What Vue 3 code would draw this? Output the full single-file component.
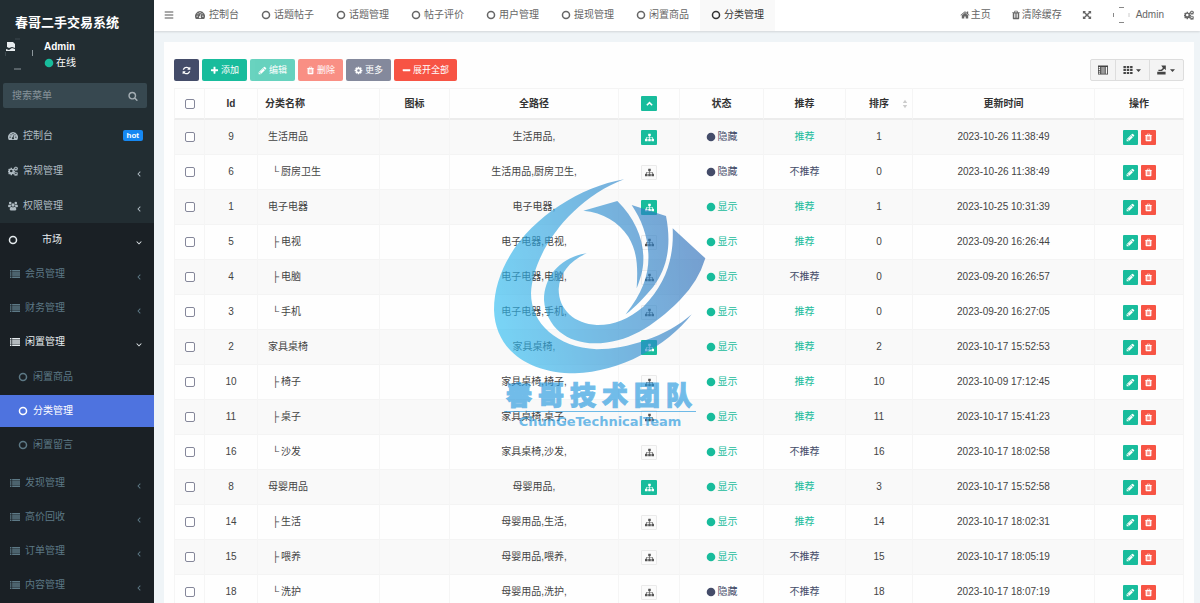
<script setup>
import { h, ref } from 'vue'

const cogPath = 'M1152 896q0-106-75-181t-181-75-181 75-75 181 75 181 181 75 181-75 75-181zm512-109v222q0 12-8 23t-20 13l-185 28q-19 54-39 91 35 50 107 138 10 12 10 25t-9 23q-27 37-99 108t-94 71q-12 0-26-9l-138-108q-44 23-91 38-16 136-29 186-7 28-36 28h-222q-14 0-24.5-8.5t-11.5-21.5l-28-184q-49-16-90-37l-141 107q-10 9-25 9-14 0-25-11-126-114-165-168-7-10-7-23 0-12 8-23 15-21 51-66.5t54-70.5q-27-50-41-99l-183-27q-13-2-21-12.5t-8-23.5v-222q0-12 8-23t19-13l186-28q14-46 39-92-40-57-107-138-10-12-10-24 0-10 9-23 26-36 98.5-107.5t94.5-71.5q13 0 26 10l138 107q44-23 91-38 16-136 29-186 7-28 36-28h222q14 0 24.5 8.5t11.5 21.5l28 184q49 16 90 37l142-107q9-9 24-9 13 0 25 10 129 119 165 170 7 8 7 22 0 12-8 23-15 21-51 66.5t-54 70.5q26 50 41 98l183 28q13 2 21 12.5t8 23.5z'

// simple gear with a wide hole, used for the double cog glyph
const gearPath = 'M740 100h312l40 230 150 62 190-134 222 222-134 190 62 150 230 40v312l-230 40-62 150 134 190-222 222-190-134-150 62-40 230h-312l-40-230-150-62-190 134-222-222 134-190-62-150-230-40v-312l230-40 62-150-134-190 222-222 190 134 150-62zM896 580a316 316 0 1 0 0 632a316 316 0 1 0 0-632z'

// all glyphs share a 1792 unit grid
const icons = {
  bars: ['M128 256h1536v192h-1536zM128 800h1536v192h-1536zM128 1344h1536v192h-1536z'],
  ring: ['M896 128a768 768 0 1 0 0 1536a768 768 0 1 0 0-1536zM896 400a496 496 0 1 1 0 992a496 496 0 1 1 0-992z'],
  circle: ['M896 128a768 768 0 1 0 0 1536a768 768 0 1 0 0-1536z'],
  dashboard: ['M896 200a896 896 0 0 0-768 1352q20 56 70 56h1396q50 0 70-56a896 896 0 0 0-768-1352zM384 1000a110 110 0 1 0 0 220a110 110 0 1 0 0-220zM540 560a110 110 0 1 0 0 220a110 110 0 1 0 0-220zM896 370a110 110 0 1 0 0 220a110 110 0 1 0 0-220zM1408 1000a110 110 0 1 0 0 220a110 110 0 1 0 0-220zM1252 560a110 110 0 1 0 0 220a110 110 0 1 0 0-220zM950 760l120 28-90 350a175 175 0 1 1-130-28z'],
  users: [
    'M896 420a300 300 0 1 0 0 600a300 300 0 1 0 0-600z',
    'M400 130a230 230 0 1 0 0 460a230 230 0 1 0 0-460z',
    'M1392 130a230 230 0 1 0 0 460a230 230 0 1 0 0-460z',
    'M600 1040q296 200 592 0q300 20 300 440q0 204-200 204h-792q-200 0-200-204q0-420 300-440z',
    'M200 620q180 120 340 20q-60 200 20 330q-170 30-240 130h-140q-170 0-170-150q0-310 190-330zM1592 620q-180 120-340 20q60 200-20 330q170 30 240 130h140q170 0 170-150q0-310-190-330z'
  ],
  list: ['M0 200h256v256h-256zM384 200h1408v256h-1408zM0 580h256v256h-256zM384 580h1408v256h-1408zM0 960h256v256h-256zM384 960h1408v256h-1408zM0 1340h256v256h-256zM384 1340h1408v256h-1408z'],
  cog: [cogPath],
  search: ['M1216 832q0-185-131.5-316.5t-316.5-131.5-316.5 131.5-131.5 316.5 131.5 316.5 316.5 131.5 316.5-131.5 131.5-316.5zm512 832q0 52-38 90t-90 38q-54 0-90-38l-343-342q-179 124-399 124-143 0-273.5-55.5t-225-150-150-225-55.5-273.5 55.5-273.5 150-225 225-150 273.5-55.5 273.5 55.5 225 150 150 225 55.5 273.5q0 220-124 399l343 343q37 37 37 90z'],
  home: ['M1472 992v480q0 26-19 45t-45 19h-384v-384h-256v384h-384q-26 0-45-19t-19-45v-480q0-1 .5-3t.5-3l575-474 575 474q1 2 1 6zm223-69l-62 74q-8 9-21 11h-3q-13 0-21-7l-692-577-692 577q-12 8-24 7-13-2-21-11l-62-74q-8-10-7-23.5t11-21.5l719-599q32-26 76-26t76 26l244 204v-195q0-14 9-23t23-9h192q14 0 23 9t9 23v408l219 182q10 8 11 21.5t-7 23.5z'],
  trash: ['M704 1376v-704q0-14-9-23t-23-9h-64q-14 0-23 9t-9 23v704q0 14 9 23t23 9h64q14 0 23-9t9-23zm256 0v-704q0-14-9-23t-23-9h-64q-14 0-23 9t-9 23v704q0 14 9 23t23 9h64q14 0 23-9t9-23zm256 0v-704q0-14-9-23t-23-9h-64q-14 0-23 9t-9 23v704q0 14 9 23t23 9h64q14 0 23-9t9-23zm-544-992h448l-48-117q-7-9-17-11h-317q-10 2-17 11zm928 32v64q0 14-9 23t-23 9h-96v948q0 83-47 143.5t-113 60.5h-832q-66 0-113-58.5t-47-141.5v-952h-96q-14 0-23-9t-9-23v-64q0-14 9-23t23-9h309l70-167q15-37 54-63t79-26h320q40 0 79 26t54 63l70 167h309q14 0 23 9t9 23z'],
  refresh: ['M1639 1056q0 5-1 7-64 268-268 434.5t-478 166.5q-146 0-282.5-55t-243.5-157l-129 129q-19 19-45 19t-45-19-19-45v-448q0-26 19-45t45-19h448q26 0 45 19t19 45-19 45l-137 137q71 66 161 102t187 36q134 0 250-65t186-179q11-17 53-117 8-23 30-23h192q13 0 22.5 9.5t9.5 22.5zm25-800v448q0 26-19 45t-45 19h-448q-26 0-45-19t-19-45 19-45l138-138q-148-137-349-137-134 0-250 65t-186 179q-11 17-53 117-8 23-30 23h-199q-13 0-22.5-9.5t-9.5-22.5v-7q65-268 270-434.5t480-166.5q146 0 284 55.5t245 156.5l130-129q19-19 45-19t45 19 19 45z'],
  plus: ['M1600 736v192q0 40-28 68t-68 28h-416v416q0 40-28 68t-68 28h-192q-40 0-68-28t-28-68v-416h-416q-40 0-68-28t-28-68v-192q0-40 28-68t68-28h416v-416q0-40 28-68t68-28h192q40 0 68 28t28 68v416h416q40 0 68 28t28 68z'],
  minus: ['M1650 736v192q0 40-28 68t-68 28h-1316q-40 0-68-28t-28-68v-192q0-40 28-68t68-28h1316q40 0 68 28t28 68z'],
  pencil: ['M491 1536l91-91-235-235-91 91v107h128v128h107zm523-928q0-22-22-22-10 0-17 7l-542 542q-7 7-7 17 0 22 22 22 10 0 17-7l542-542q7-7 7-17zm-54-192l416 416-832 832h-416v-416zm683 96q0 53-37 90l-166 166-416-416 166-165q36-38 90-38 53 0 91 38l235 234q37 39 37 91z'],
  sitemap: ['M1792 1248v320q0 40-28 68t-68 28h-320q-40 0-68-28t-28-68v-320q0-40 28-68t68-28h96v-192h-512v192h96q40 0 68 28t28 68v320q0 40-28 68t-68 28h-320q-40 0-68-28t-28-68v-320q0-40 28-68t68-28h96v-192h-512v192h96q40 0 68 28t28 68v320q0 40-28 68t-68 28h-320q-40 0-68-28t-28-68v-320q0-40 28-68t68-28h96v-192q0-52 38-90t90-38h512v-192h-96q-40 0-68-28t-28-68v-320q0-40 28-68t68-28h320q40 0 68 28t28 68v320q0 40-28 68t-68 28h-96v192h512q52 0 90 38t38 90v192h96q40 0 68 28t28 68z'],
  expand: ['M160 160h560l-190 190 366 366 366-366-190-190h560v560l-190-190-366 366 366 366 190-190v560h-560l190-190-366-366-366 366 190 190h-560v-560l190 190 366-366-366-366-190 190z'],
  up: ['M896 480l640 640-230 230-410-410-410 410-230-230z'],
  left: ['M1120 300l140 140-450 456 450 456-140 140-590-596z'],
  down: ['M300 620l140-140 456 450 456-450 140 140-596 590z'],
  caret: ['M250 600h1292l-646 680z'],
  columns: ['M0 100h1792v1592h-1792zM130 360v200h240v-200zM130 690v200h240v-200zM130 1020v200h240v-200zM130 1350v210h240v-210zM520 360v1200h90v-1200zM740 360v1200h90v-1200zM960 360v1200h90v-1200zM1180 360v1200h90v-1200zM1400 360v1200h240v-1200z'],
  grid: ['M80 160h440v400h-440zM676 160h440v400h-440zM1272 160h440v400h-440zM80 696h440v400h-440zM676 696h440v400h-440zM1272 696h440v400h-440zM80 1232h440v400h-440zM676 1232h440v400h-440zM1272 1232h440v400h-440z'],
  export: ['M40 1230h1500v460h-1500zM760 100h820v820l-260-260-430 430h-640v-220h480l330-330z'],
  sort: ['M896 120l400 600h-800zM896 1672l400-600h-800z']
}

const Icon = (props) => h(
  'svg',
  { class: 'icon', viewBox: '0 0 1792 1792', 'aria-hidden': 'true' },
  props.name === 'cogs'
    ? [
        h('path', { d: gearPath, transform: 'translate(-60 260) scale(.72)' }),
        h('path', { d: gearPath, transform: 'translate(1040 60) scale(.42)' }),
        h('path', { d: gearPath, transform: 'translate(1040 980) scale(.42)' })
      ]
    : icons[props.name].map((d) => h('path', { d }))
)
Icon.props = ['name']

const keyword = ref('')

const mainMenu = [
  { title: '控制台', icon: 'dashboard', badge: 'hot' },
  { title: '常规管理', icon: 'cogs' },
  { title: '权限管理', icon: 'users' }
]

const marketMenu = [
  { title: '会员管理' },
  { title: '财务管理' },
  {
    title: '闲置管理',
    open: true,
    children: [
      { title: '闲置商品' },
      { title: '分类管理', active: true },
      { title: '闲置留言' }
    ]
  },
  { title: '发现管理' },
  { title: '高价回收' },
  { title: '订单管理' },
  { title: '内容管理' }
]

const tabs = ['控制台', '话题帖子', '话题管理', '帖子评价', '用户管理', '提现管理', '闲置商品', '分类管理']
const activeTab = ref('分类管理')

const tools = [
  { text: '', icon: 'refresh', type: 'primary', label: '刷新' },
  { text: '添加', icon: 'plus', type: 'success' },
  { text: '编辑', icon: 'pencil', type: 'success', disabled: true },
  { text: '删除', icon: 'trash', type: 'danger', disabled: true },
  { text: '更多', icon: 'cog', type: 'primary', disabled: true },
  { text: '展开全部', icon: 'minus', type: 'danger' }
]

const rows = [
  { id: 9, name: '生活用品', path: '生活用品,', parent: true, show: false, rec: true, weigh: 1, time: '2023-10-26 11:38:49' },
  { id: 6, mark: '└', name: '厨房卫生', path: '生活用品,厨房卫生,', show: false, rec: false, weigh: 0, time: '2023-10-26 11:38:49' },
  { id: 1, name: '电子电器', path: '电子电器,', parent: true, show: true, rec: true, weigh: 1, time: '2023-10-25 10:31:39' },
  { id: 5, mark: '├', name: '电视', path: '电子电器,电视,', show: true, rec: true, weigh: 0, time: '2023-09-20 16:26:44' },
  { id: 4, mark: '├', name: '电脑', path: '电子电器,电脑,', show: true, rec: false, weigh: 0, time: '2023-09-20 16:26:57' },
  { id: 3, mark: '└', name: '手机', path: '电子电器,手机,', show: true, rec: true, weigh: 0, time: '2023-09-20 16:27:05' },
  { id: 2, name: '家具桌椅', path: '家具桌椅,', parent: true, show: true, rec: true, weigh: 2, time: '2023-10-17 15:52:53' },
  { id: 10, mark: '├', name: '椅子', path: '家具桌椅,椅子,', show: true, rec: true, weigh: 10, time: '2023-10-09 17:12:45' },
  { id: 11, mark: '├', name: '桌子', path: '家具桌椅,桌子,', show: true, rec: true, weigh: 11, time: '2023-10-17 15:41:23' },
  { id: 16, mark: '└', name: '沙发', path: '家具桌椅,沙发,', show: true, rec: false, weigh: 16, time: '2023-10-17 18:02:58' },
  { id: 8, name: '母婴用品', path: '母婴用品,', parent: true, show: true, rec: true, weigh: 3, time: '2023-10-17 15:52:58' },
  { id: 14, mark: '├', name: '生活', path: '母婴用品,生活,', show: true, rec: true, weigh: 14, time: '2023-10-17 18:02:31' },
  { id: 15, mark: '├', name: '喂养', path: '母婴用品,喂养,', show: true, rec: false, weigh: 15, time: '2023-10-17 18:05:19' },
  { id: 18, mark: '└', name: '洗护', path: '母婴用品,洗护,', show: false, rec: false, weigh: 18, time: '2023-10-17 18:07:19' }
]
</script>

<template>
  <div class="layout">
    <aside class="sidebar">
      <h1 class="brand">春哥二手交易系统</h1>

      <div class="user">
        <svg class="avatar" viewBox="0 0 30 32" aria-hidden="true">
          <path d="M2 4h6l2 2v4l-3-1-3 1-2-1zM1 11l3 1 3-2 3 1v2H1z" fill="#e8edf0" />
          <path d="M27.500 12v6M9 31h7" stroke="#8d979c" fill="none" />
          <path d="M10 1h5M.5 14v4" stroke="#3c484e" fill="none" />
        </svg>
        <div class="user-info">
          <strong>Admin</strong>
          <span class="online"><Icon name="circle" />在线</span>
        </div>
      </div>

      <form class="search" @submit.prevent>
        <input v-model="keyword" type="text" placeholder="搜索菜单" aria-label="搜索菜单">
        <button type="submit" aria-label="搜索"><Icon name="search" /></button>
      </form>

      <nav>
        <ul class="menu">
          <li v-for="item in mainMenu" :key="item.title">
            <a href="#">
              <Icon :name="item.icon" />
              <span>{{ item.title }}</span>
              <b v-if="item.badge" class="badge">{{ item.badge }}</b>
              <Icon v-else name="left" class="arrow" />
            </a>
          </li>
        </ul>

        <div class="submenu">
          <a href="#" class="market open">
            <Icon name="ring" />
            <span>市场</span>
            <Icon name="down" class="arrow" />
          </a>
          <ul>
            <li v-for="item in marketMenu" :key="item.title">
              <a href="#" class="level-2" :class="{ open: item.open }">
                <Icon name="list" />
                <span>{{ item.title }}</span>
                <Icon :name="item.open ? 'down' : 'left'" class="arrow" />
              </a>
              <ul v-if="item.children" class="children">
                <li v-for="child in item.children" :key="child.title">
                  <a href="#" class="level-3" :class="{ active: child.active }">
                    <Icon name="ring" />
                    <span>{{ child.title }}</span>
                  </a>
                </li>
              </ul>
            </li>
          </ul>
        </div>
      </nav>
    </aside>

    <div class="main">
      <header class="topbar">
        <button class="toggle" type="button" aria-label="切换菜单"><Icon name="bars" /></button>
        <nav class="tabs">
          <a
            v-for="tab in tabs"
            :key="tab"
            href="#"
            :class="{ active: tab === activeTab, first: tab === '控制台' }"
            @click.prevent="activeTab = tab"
          >
            <Icon :name="tab === '控制台' ? 'dashboard' : 'ring'" />{{ tab }}
          </a>
        </nav>
        <nav class="top-links">
          <a href="#"><Icon name="home" />主页</a>
          <a href="#"><Icon name="trash" />清除缓存</a>
          <a href="#" aria-label="全屏"><Icon name="expand" /></a>
          <a href="#" class="account">
            <svg class="account-avatar" viewBox="0 0 18 18" aria-hidden="true">
              <path d="M7 1.500h5M7 16.500h5M1.500 7v4" stroke="#888" fill="none" />
              <path d="M17 7v4" stroke="#ccc" fill="none" />
            </svg>
            Admin
          </a>
          <a href="#" aria-label="设置"><Icon name="cogs" /></a>
        </nav>
      </header>

      <main class="panel">
        <div class="toolbar">
          <button
            v-for="tool in tools"
            :key="tool.icon"
            type="button"
            class="btn"
            :class="tool.type"
            :disabled="tool.disabled"
            :aria-label="tool.label"
          >
            <Icon :name="tool.icon" /><span v-if="tool.text">{{ tool.text }}</span>
          </button>
          <div class="view-group">
            <button type="button" aria-label="切换视图"><Icon name="columns" /></button>
            <button type="button" aria-label="列"><Icon name="grid" /><Icon name="caret" class="caret" /></button>
            <button type="button" aria-label="导出"><Icon name="export" /><Icon name="caret" class="caret" /></button>
          </div>
        </div>

        <table>
          <colgroup>
            <col class="w-check">
            <col class="w-id">
            <col class="w-name">
            <col class="w-icon">
            <col class="w-path">
            <col class="w-tree">
            <col class="w-status">
            <col class="w-rec">
            <col class="w-weigh">
            <col class="w-time">
            <col class="w-ops">
          </colgroup>
          <thead>
            <tr>
              <th><input type="checkbox" aria-label="全选"></th>
              <th>Id</th>
              <th class="name">分类名称</th>
              <th>图标</th>
              <th>全路径</th>
              <th><button type="button" class="mini success" aria-label="收起"><Icon name="up" /></button></th>
              <th>状态</th>
              <th>推荐</th>
              <th class="sortable">排序<Icon name="sort" class="sort" /></th>
              <th>更新时间</th>
              <th>操作</th>
            </tr>
          </thead>
          <tbody>
            <tr v-for="row in rows" :key="row.id">
              <td><input type="checkbox" :aria-label="row.name"></td>
              <td>{{ row.id }}</td>
              <td class="name"><span v-if="row.mark" class="mark">{{ row.mark }}</span>{{ row.name }}</td>
              <td></td>
              <td>{{ row.path }}</td>
              <td>
                <button type="button" class="mini" :class="row.parent ? 'success' : 'plain'" aria-label="子分类">
                  <Icon name="sitemap" />
                </button>
              </td>
              <td>
                <span class="status" :class="{ on: row.show }"><Icon name="circle" />{{ row.show ? '显示' : '隐藏' }}</span>
              </td>
              <td><span class="status" :class="{ on: row.rec }">{{ row.rec ? '推荐' : '不推荐' }}</span></td>
              <td>{{ row.weigh }}</td>
              <td>{{ row.time }}</td>
              <td>
                <div class="ops">
                  <button type="button" class="mini success" aria-label="编辑"><Icon name="pencil" /></button>
                  <button type="button" class="mini danger" aria-label="删除"><Icon name="trash" /></button>
                </div>
              </td>
            </tr>
          </tbody>
        </table>
      </main>
    </div>

    <!-- Team watermark floating above the table -->
    <div class="watermark">
      <svg viewBox="0 0 720 630" aria-hidden="true">
        <defs>
          <linearGradient id="wave" gradientUnits="userSpaceOnUse" x1="40" y1="400" x2="680" y2="260">
            <stop offset="0" stop-color="#2fbdf2" />
            <stop offset="1" stop-color="#2c6cb8" />
          </linearGradient>
        </defs>
        <g fill="url(#wave)">
          <path d="M432 28C250 60 42 220 42 420C46 540 145 610 285 610C420 606 560 530 635 433C560 500 440 538 350 538C230 532 153 460 153 370C158 250 270 90 432 28z" />
          <path d="M320 250C240 262 192 320 192 390C198 470 260 520 345 520C440 520 520 470 600 390Q655 335 676 265L578 175C582 260 560 340 490 410C445 448 400 466 350 465C285 462 236 420 236 358C238 310 270 272 320 250z" />
          <path d="M455 105L558 138C574 220 565 290 520 350C495 380 465 412 437 433C490 365 508 310 505 250C502 195 485 150 455 105z" />
          <path d="M310 122L412 93C465 145 492 210 490 270C490 300 480 330 470 355C474 290 472 245 445 200C415 155 370 128 310 122z" />
        </g>
      </svg>
      <p class="team">春哥技术团队</p>
      <p class="team-en">ChunGeTechnicalTeam</p>
    </div>
  </div>
</template>

<style>
html,
body {
  margin: 0;
  background: #eff4f7;
}
</style>

<style scoped>
.layout {
  position: relative;
  display: flex;
  height: 100vh;
  overflow: hidden;
  font-family: "Liberation Sans", "Noto Sans CJK SC", sans-serif;
  font-size: 10px;
  line-height: 14px;
  color: #444;
}

a {
  color: inherit;
  text-decoration: none;
}

ul {
  list-style: none;
  margin: 0;
  padding: 0;
}

button,
input {
  font: inherit;
  margin: 0;
}

.icon {
  width: 10px;
  height: 10px;
  flex: none;
  fill: currentColor;
  fill-rule: evenodd;
}

/* Sidebar */
.sidebar {
  width: 154px;
  flex: none;
  background: #222d32;
  color: #b0bcc3;
}

.brand {
  margin: 0;
  padding: 13px 20px 0 0;
  font-size: 13px;
  line-height: 20px;
  text-align: center;
  color: #fff;
}

.user {
  display: flex;
  gap: 9px;
  padding: 5px 5px 0;
}

.avatar {
  width: 30px;
  height: 32px;
}

.user-info {
  display: flex;
  flex-direction: column;
  gap: 2px;
  padding-top: 2px;
  color: #fff;
}

.online {
  display: flex;
  align-items: center;
  gap: 2px;
}

.online .icon {
  color: #18bc9c;
}

.search {
  display: flex;
  align-items: center;
  height: 25px;
  margin: 13px 7px 10px 3px;
  background: #374850;
  border-radius: 2px;
}

.search input {
  flex: 1;
  min-width: 0;
  padding: 0 9px;
  border: 0;
  outline: 0;
  background: none;
  color: #fff;
}

.search input::placeholder {
  color: #87939a;
}

.search button {
  display: flex;
  padding: 0 9px;
  border: 0;
  background: none;
  color: #a3adb3;
}

.menu a {
  display: flex;
  align-items: center;
  gap: 5px;
  height: 35px;
  padding: 0 11px 0 8px;
}

.badge {
  margin-left: auto;
  padding: 0 4px;
  border-radius: 2px;
  background: #1688f2;
  color: #fff;
  font-size: 8px;
  line-height: 11px;
}

.arrow {
  width: 8px;
  height: 8px;
  margin-left: auto;
  position: relative;
  top: 3px;
}

.submenu {
  padding-top: 1px;
  height: 400px;
  background: #1a2025;
  color: #5d7986;
}

.market,
.level-2,
.level-3 {
  display: flex;
  align-items: center;
  gap: 5px;
  height: 32px;
  margin-bottom: 2px;
  padding: 0 11px 0 10px;
}

.market {
  gap: 24px;
  padding-left: 8px;
}

.level-3 {
  padding-left: 18px;
}

.children {
  padding: 1px 0 4px;
}

.open {
  color: #e6ecef;
}

.active.level-3 {
  background: #4e73df;
  color: #fff;
}

/* Top bar */
.main {
  flex: 1;
  min-width: 0;
}

.topbar {
  display: flex;
  align-items: center;
  height: 31px;
  background: #fff;
  box-shadow: 0 1px 2px rgba(0, 0, 0, 0.12);
  color: #666;
}

.topbar a,
.toggle {
  padding-bottom: 1px;
}

.toggle {
  display: flex;
  padding: 0 10px 1px;
  border: 0;
  background: none;
  color: #555;
}

.tabs {
  display: flex;
  align-self: stretch;
}

.tabs a {
  display: flex;
  align-items: center;
  gap: 3px;
  padding: 0 11px 1px;
}

.tabs a.active {
  background: #f9f9f9;
  color: #333;
}

.tabs a.first {
  gap: 4px;
}

.top-links {
  display: flex;
  align-items: center;
  gap: 20px;
  margin-left: auto;
  padding-right: 6px;
}

.top-links a {
  display: flex;
  align-items: center;
  gap: 1px;
}

.top-links .account {
  gap: 6px;
}

.account-avatar {
  width: 18px;
  height: 18px;
}

/* Content panel */
.panel {
  margin: 11px 6px 0 10px;
  padding: 17px 10px;
  background: #fefefe;
}

.toolbar {
  display: flex;
  gap: 3px;
  margin-bottom: 7px;
}

.btn {
  display: flex;
  align-items: center;
  gap: 2px;
  height: 22px;
  padding: 0 8px;
  border: 0;
  border-radius: 2px;
  color: #fff;
  font-size: 9px;
}

.btn .icon {
  width: 9px;
  height: 9px;
}

.primary {
  background: #444c69;
}

.success {
  background: #18bc9c;
}

.danger {
  background: #f75444;
}

.btn:disabled {
  opacity: 0.65;
}

.view-group {
  display: flex;
  margin-left: auto;
  border: 1px solid #ddd;
  border-radius: 2px;
  background: #f4f4f4;
}

.view-group button {
  display: flex;
  align-items: center;
  justify-content: center;
  gap: 2px;
  height: 20px;
  padding: 0 7px;
  border: 0;
  background: none;
  color: #444;
}

.view-group button + button {
  border-left: 1px solid #ddd;
}

.view-group .icon {
  width: 10px;
  height: 10px;
}

.view-group .caret {
  width: 7px;
  height: 7px;
}

table {
  width: 100%;
  table-layout: fixed;
  border-collapse: separate;
  border-spacing: 0;
}

.w-check { width: 31px; }
.w-id { width: 53px; }
.w-name { width: 122px; }
.w-icon { width: 70px; }
.w-path { width: 169px; }
.w-tree { width: 61px; }
.w-status { width: 84px; }
.w-rec { width: 82px; }
.w-weigh { width: 67px; }
.w-time { width: 182px; }
.w-ops { width: 89px; }

th,
td {
  box-sizing: border-box;
  padding: 0 7px;
  border-right: 1px solid #f5f5f5;
  text-align: center;
  vertical-align: middle;
}

th {
  height: 32px;
  border-top: 1px solid #f4f4f4;
  border-bottom: 2px solid #ececec;
  color: #333;
}

td {
  height: 35px;
  padding: 0 10px;
  border-bottom: 1px solid #f4f4f4;
}

th:first-child,
td:first-child {
  padding: 0;
  border-left: 1px solid #f5f5f5;
}

tbody tr:nth-child(odd) {
  background: #f9f9f9;
}

.name {
  text-align: left;
}

.mark {
  margin: 0 2px 0 4px;
}

.sortable {
  position: relative;
}

.sort {
  position: absolute;
  top: 10px;
  right: 2px;
  color: #ccc;
}

input[type="checkbox"] {
  appearance: none;
  display: block;
  width: 10px;
  height: 10px;
  margin: 0 auto;
  border: 1px solid #85879a;
  border-radius: 2px;
  background: #fff;
}

.mini {
  display: flex;
  align-items: center;
  justify-content: center;
  width: 16px;
  height: 15px;
  margin: 0 auto;
  padding: 0;
  border: 0;
  border-radius: 1px;
  color: #fff;
}

.mini .icon {
  width: 9px;
  height: 9px;
}

.plain {
  border: 1px solid #eaeaea;
  background: #fbfbfb;
  color: #555;
}

.ops {
  display: flex;
  justify-content: center;
  gap: 3px;
}

.ops .mini {
  width: 15px;
  margin: 0;
}

.status {
  display: flex;
  align-items: center;
  justify-content: center;
  gap: 2px;
  color: #444c69;
}

.status.on {
  color: #18bc9c;
}

/* Watermark */
.watermark {
  position: absolute;
  left: 480px;
  top: 170px;
  width: 240px;
  opacity: 0.64;
  pointer-events: none;
}

.watermark svg {
  display: block;
  width: 240px;
  height: 210px;
}

.watermark p {
  margin: 0 24px;
  color: #2397de;
  font-weight: 900;
}

.watermark .team {
  padding: 2px 4px 0 2px;
  border-bottom: 1px solid #2397de;
  font-size: 26px;
  line-height: 29px;
  text-align: justify;
  text-align-last: justify;
  -webkit-text-stroke: 1px #2397de;
}

.watermark .team-en {
  font-family: "DejaVu Sans", sans-serif;
  font-size: 13px;
  line-height: 20px;
  text-align: center;
}
</style>
